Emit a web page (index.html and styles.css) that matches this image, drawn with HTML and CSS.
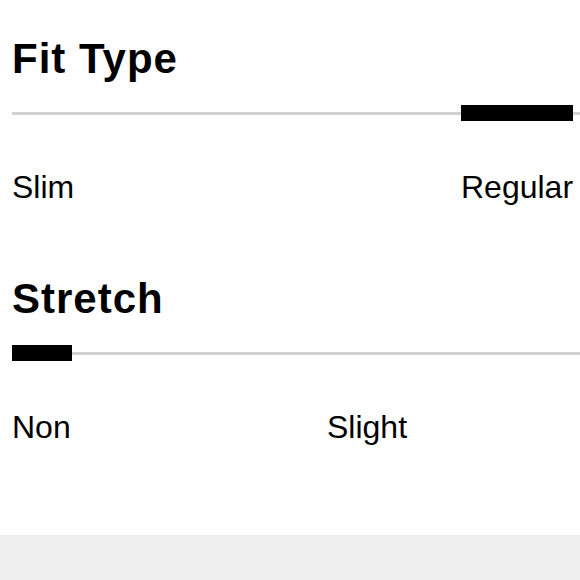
FILE: index.html
```html
<!DOCTYPE html>
<html>
<head>
<meta charset="utf-8">
<link rel="stylesheet" href="styles.css">
</head>
<body>
<div class="page">
  <section class="attr">
    <h2 class="attr-title">Fit Type</h2>
    <div class="track">
      <div class="track-bar" style="margin-left: 449px; width: 112px;"></div>
    </div>
    <div class="labels labels-fit">
      <span class="label">Slim</span>
      <span class="label">Regular</span>
    </div>
  </section>
  <section class="attr">
    <h2 class="attr-title">Stretch</h2>
    <div class="track">
      <div class="track-bar" style="margin-left: 0px; width: 60px;"></div>
    </div>
    <div class="labels labels-stretch">
      <span class="label">Non</span>
      <span class="label">Slight</span>
    </div>
  </section>
</div>
<div class="footer"></div>
</body>
</html>
```

FILE: styles.css
```css
html, body {
  margin: 0;
  padding: 0;
  background: #ffffff;
}
body {
  width: 580px;
  height: 580px;
  overflow: hidden;
  display: flex;
  flex-direction: column;
  font-family: "Liberation Sans", Arial, Helvetica, sans-serif;
  color: #000;
}
.page {
  flex: 1;
  padding: 36px 0 0 12px;
}
.attr {
  display: flex;
  flex-direction: column;
}
.attr + .attr {
  margin-top: 71px;
}
.attr-title {
  margin: 0;
  font-size: 42px;
  line-height: 46px;
  letter-spacing: 1px;
  font-weight: bold;
}
.track {
  margin-top: 23px;
  height: 16px;
  display: flex;
  background: linear-gradient(#d2d2d2, #d2d2d2) left center / 100% 3px no-repeat;
}
.track-bar {
  height: 16px;
  background: #000;
}
.labels {
  margin-top: 48px;
  display: grid;
  font-size: 32px;
  line-height: 36px;
}
.labels-fit {
  grid-template-columns: 449px 1fr;
}
.labels-stretch {
  grid-template-columns: 315px 1fr;
}
.footer {
  height: 45px;
  background: #efefef;
}
```
